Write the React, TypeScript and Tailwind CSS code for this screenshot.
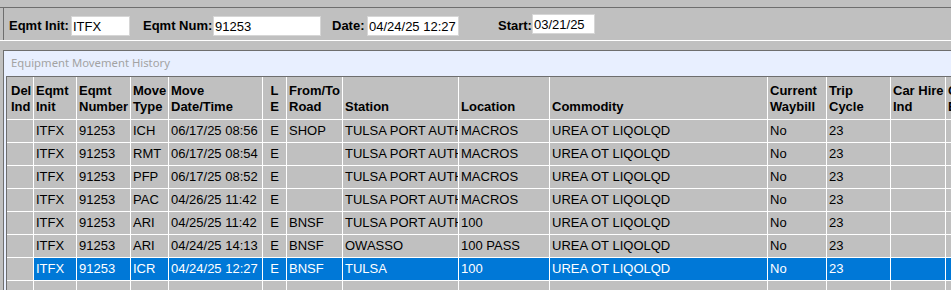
import React from "react";

const cols = [
  { w: "w-[27px]", h: ["Del", "Ind"], pad: "pl-[4px]" },
  { w: "w-[43px]", h: ["Eqmt", "Init"] },
  { w: "w-[54px]", h: ["Eqmt", "Number"] },
  { w: "w-[38px]", h: ["Move", "Type"] },
  { w: "w-[94px]", h: ["Move", "Date/Time"] },
  { w: "w-[24px]", h: ["L", "E"], center: true },
  { w: "w-[56px]", h: ["From/To", "Road"] },
  { w: "w-[116px]", h: ["", "Station"] },
  { w: "w-[91px]", h: ["", "Location"] },
  { w: "w-[218px]", h: ["", "Commodity"] },
  { w: "w-[59px]", h: ["Current", "Waybill"] },
  { w: "w-[64px]", h: ["Trip", "Cycle"] },
  { w: "w-[55px]", h: ["Car Hire", "Ind"] },
  { w: "w-[60px]", h: ["Car", "Est"] },
];

const rows = [
  ["", "ITFX", "91253", "ICH", "06/17/25 08:56", "E", "SHOP", "TULSA PORT AUTH", "MACROS", "UREA OT LIQOLQD", "No", "23", "", ""],
  ["", "ITFX", "91253", "RMT", "06/17/25 08:54", "E", "", "TULSA PORT AUTH", "MACROS", "UREA OT LIQOLQD", "No", "23", "", ""],
  ["", "ITFX", "91253", "PFP", "06/17/25 08:52", "E", "", "TULSA PORT AUTH", "MACROS", "UREA OT LIQOLQD", "No", "23", "", ""],
  ["", "ITFX", "91253", "PAC", "04/26/25 11:42", "E", "", "TULSA PORT AUTH", "MACROS", "UREA OT LIQOLQD", "No", "23", "", ""],
  ["", "ITFX", "91253", "ARI", "04/25/25 11:42", "E", "BNSF", "TULSA PORT AUTH", "100", "UREA OT LIQOLQD", "No", "23", "", ""],
  ["", "ITFX", "91253", "ARI", "04/24/25 14:13", "E", "BNSF", "OWASSO", "100 PASS", "UREA OT LIQOLQD", "No", "23", "", ""],
  ["", "ITFX", "91253", "ICR", "04/24/25 12:27", "E", "BNSF", "TULSA", "100", "UREA OT LIQOLQD", "No", "23", "", ""],
  ["", "", "", "", "", "", "", "", "", "", "", "", "", ""],
];

function Field({ label, lw, iw, ml, value, up }: { label: string; lw: string; iw: string; ml: string; value: string; up?: boolean }) {
  return (
    <div className={`flex items-start ${ml}`}>
      <span className={`${lw} font-bold leading-[20px] text-black`}>{label}</span>
      <input
        readOnly
        value={value}
        className={`${iw} h-[20px] bg-white border border-[#d6d6d6] pl-[1px] text-[13px] text-black outline-none ${up ? "-mt-[2px]" : ""}`}
      />
    </div>
  );
}

export default function App() {
  return (
    <div className="w-[951px] h-[290px] overflow-hidden bg-[#c0c0c0] font-['Liberation_Sans',Arial,sans-serif] text-[13px] text-black">
      <div className="h-[7px]" />
      <div className="border-t border-[#6e6e6e] border-b border-b-white pl-[3px]">
        <div className="border-l border-[#6e6e6e] h-[32px] flex items-start pt-[8px] pl-[5px]">
          <Field label="Eqmt Init:" lw="w-[62px]" iw="w-[59px]" ml="" value="ITFX" />
          <Field label="Eqmt Num:" lw="w-[70px]" iw="w-[108px]" ml="ml-[13px]" value="91253" />
          <Field label="Date:" lw="w-[35px]" iw="w-[92px]" ml="ml-[11px]" value="04/24/25 12:27" />
          <Field label="Start:" lw="w-[34px]" iw="w-[63px]" ml="ml-[39px]" value="03/21/25" up />
        </div>
      </div>
      <div className="h-[9px]" />
      <div className="ml-[3px] border-t border-l border-[#6e6e6e] bg-[#e8efff] pl-[2px]">
        <div className="h-[25px] pl-[5px] flex items-center font-['Noto_Sans',sans-serif] text-[11.3px] text-[#a3a3a3]">
          Equipment Movement History
        </div>
        <div className="border-t border-l border-[#6e6e6e] bg-[#c0c0c0]">
          <div className="flex h-[43px] border-b border-white">
            {cols.map((c, i) => (
              <div
                key={i}
                className={`${c.w} shrink-0 border-r border-white flex flex-col justify-end pb-[4px] font-bold leading-[16px] whitespace-nowrap overflow-hidden ${c.center ? "items-center" : c.pad ?? "pl-[2px]"}`}
              >
                <span>{c.h[0]}</span>
                <span>{c.h[1]}</span>
              </div>
            ))}
          </div>
          {rows.map((r, ri) => {
            const sel = ri === 6;
            return (
              <div key={ri} className="flex h-[23px] border-b border-white">
                {cols.map((c, ci) => (
                  <div
                    key={ci}
                    className={`${c.w} shrink-0 border-r border-white flex items-center whitespace-nowrap overflow-hidden ${c.center ? "justify-center" : "pl-[2px]"} ${sel && ci > 0 ? "bg-[#0078d7] text-white" : ""}`}
                  >
                    {r[ci]}
                  </div>
                ))}
              </div>
            );
          })}
        </div>
      </div>
    </div>
  );
}
